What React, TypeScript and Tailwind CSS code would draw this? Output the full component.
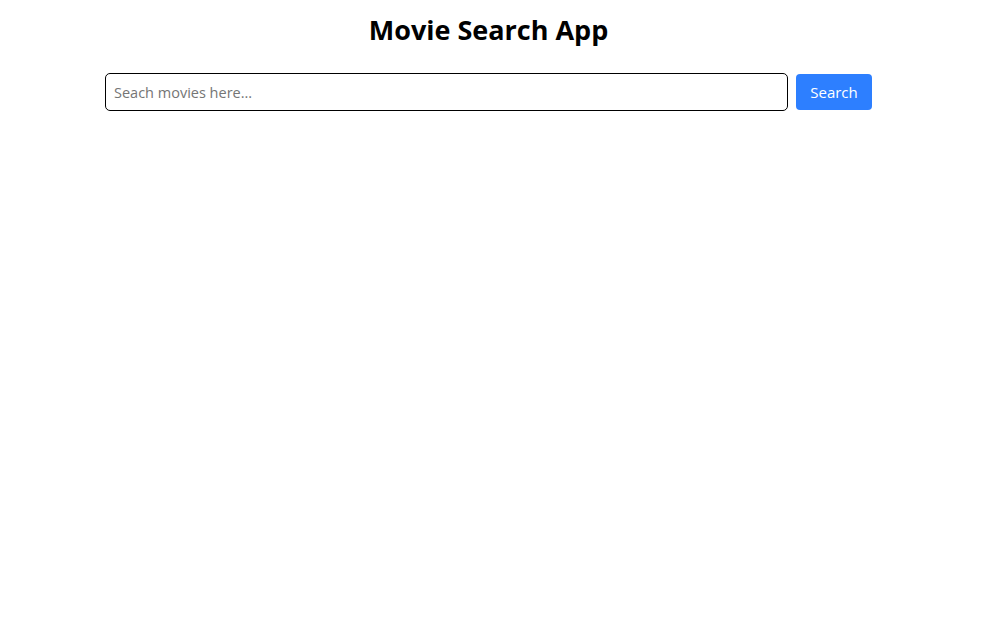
import React from "react";

export default function App() {
  return (
    <div className="min-h-[644px] w-[1006px] bg-white" style={{ fontFamily: '"Comic Sans MS", "Open Sans", "Liberation Sans", sans-serif' }}>
      <div className="w-[977px] flex flex-col items-center">
        <h1 className="mt-[12px] text-[27px] leading-[36px] font-bold text-black">Movie Search App</h1>
        <div className="mt-[25px] flex items-center gap-[8px]">
          <input
            type="text"
            placeholder="Seach movies here..."
            className="w-[683px] h-[38px] border border-black rounded-[5px] px-[8px] text-[14.5px] text-black placeholder:text-[#757575] outline-none"
          />
          <button className="w-[76px] h-[36px] rounded-[4px] bg-[#2d7fff] text-white text-[15px]">Search</button>
        </div>
      </div>
    </div>
  );
}
